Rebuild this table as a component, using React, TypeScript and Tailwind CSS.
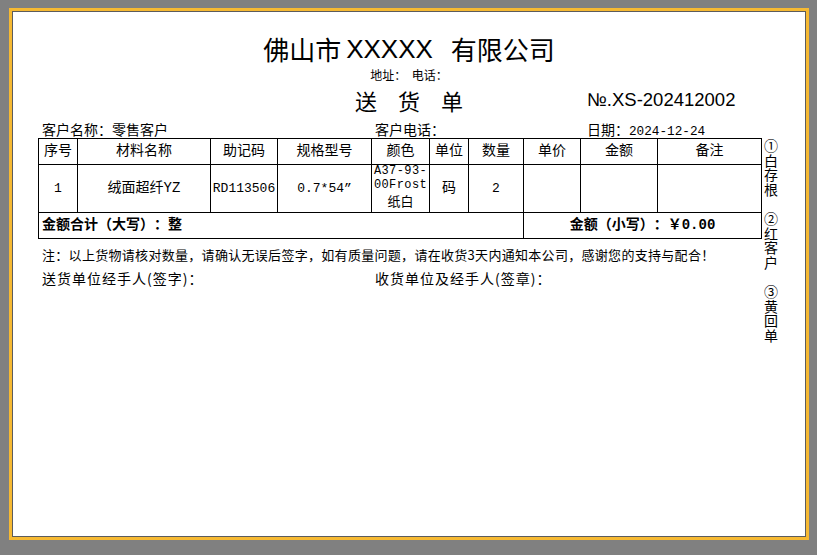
const cjk = "font-['Noto_Sans_CJK_SC',sans-serif]";
const mono = "font-['Liberation_Mono','Noto_Sans_CJK_SC',monospace]";

const columns = [
  { label: "序号", width: "w-[39px]" },
  { label: "材料名称", width: "w-[133px]" },
  { label: "助记码", width: "w-[67px]" },
  { label: "规格型号", width: "w-[94px]" },
  { label: "颜色", width: "w-[58px]" },
  { label: "单位", width: "w-[39px]" },
  { label: "数量", width: "w-[55px]" },
  { label: "单价", width: "w-[57px]" },
  { label: "金额", width: "w-[77px]" },
  { label: "备注", width: "w-[104px]" },
];

// 三联单：白存根 / 红客户 / 黄回单
const copies = ["①白存根", "②红客户", "③黄回单"];

const cell = "border border-black p-0 text-center align-middle";

export default function App() {
  return (
    <div className="w-[817px] h-[555px] bg-[#808080] pt-[8px] pl-[9px]">
      <div className="w-[800px] h-[532px] border-[3px] border-[#f6b932]">
        <div
          className={`h-full border border-[#5c5c5c] bg-white text-black [text-spacing-trim:space-all] ${cjk}`}
        >
          {/* Header */}
          <h1 className="mt-[22px] flex justify-center text-[26px] leading-[30px] font-normal">
            <span>佛山市</span>
            <span className="ml-[5px] font-['Liberation_Sans',sans-serif]">XXXXX</span>
            <span className="ml-[18px]">有限公司</span>
          </h1>
          <p className="mt-[4px] text-center text-[12px] leading-[14px] whitespace-pre">
            地址：  电话：
          </p>
          <div className="mt-[5px] flex items-center h-[26px] pl-[342px]">
            <div className="flex w-[112px] gap-[21px] text-[22px] leading-[26px]">
              <span>送</span>
              <span>货</span>
              <span>单</span>
            </div>
            <span className="ml-[120px] text-[18.5px] leading-[26px] font-['Liberation_Sans',sans-serif]">
              №.XS-202412002
            </span>
          </div>

          {/* Customer info */}
          <div className="mt-[7px] flex h-[18px] pl-[29px] text-[14px] leading-[18px]">
            <span className="w-[333px]">客户名称：零售客户</span>
            <span className="w-[212px]">客户电话：</span>
            <span>
              日期：<span className={`text-[12.7px] ${mono}`}>2024-12-24</span>
            </span>
          </div>

          <div className="flex items-start pl-[25px]">
            <div className="w-[723px]">
              <table className={`w-[723px] table-fixed border-collapse text-[14px] ${mono}`}>
                <colgroup>
                  {columns.map((c) => (
                    <col key={c.label} className={c.width} />
                  ))}
                </colgroup>
                <tbody>
                  <tr className="h-[26px]">
                    {columns.map((c) => (
                      <td key={c.label} className={cell}>
                        {c.label}
                      </td>
                    ))}
                  </tr>
                  <tr className="h-[48px] text-[13px]">
                    <td className={cell}>1</td>
                    <td className={`${cell} text-[14px]`}>绒面超纤YZ</td>
                    <td className={cell}>RD113506</td>
                    <td className={cell}>0.7*54”</td>
                    <td className={cell}>
                      <div className="text-[12px] leading-[13.6px] tracking-[0.4px]">A37-93-</div>
                      <div className="text-[12px] leading-[13.6px] tracking-[0.4px]">00Frost</div>
                      <div className="text-[13px] leading-[19px]">纸白</div>
                    </td>
                    <td className={`${cell} text-[14px]`}>码</td>
                    <td className={cell}>2</td>
                    <td className={cell}></td>
                    <td className={cell}></td>
                    <td className={cell}></td>
                  </tr>
                  <tr className="h-[26px] font-bold">
                    <td colSpan={7} className="border border-black px-[3px] text-left">
                      金额合计（大写）：整
                    </td>
                    <td colSpan={3} className={cell}>
                      金额（小写）：￥0.00
                    </td>
                  </tr>
                </tbody>
              </table>

              <p className="mt-[8px] pl-[4px] text-[13px] leading-[16px] tracking-[0.3px]">
                注：以上货物请核对数量，请确认无误后签字，如有质量问题，请在收货3天内通知本公司，感谢您的支持与配合！
              </p>
              <div className="mt-[6px] flex pl-[4px] text-[14px] leading-[18px] tracking-[1px]">
                <span className="w-[333px]">送货单位经手人(签字)：</span>
                <span>收货单位及经手人(签章)：</span>
              </div>
            </div>

            {/* Copy labels */}
            <div className="mt-[1px] ml-[2px] flex w-[16px] flex-col items-center gap-[15px] text-[14px] leading-[16px] tracking-[0.5px]">
              {copies.map((label) => (
                <span key={label} className="[writing-mode:vertical-rl]">
                  {label}
                </span>
              ))}
            </div>
          </div>
        </div>
      </div>
    </div>
  );
}
